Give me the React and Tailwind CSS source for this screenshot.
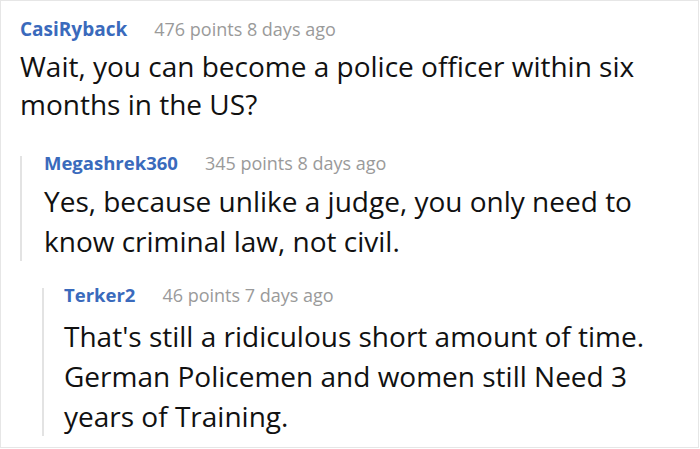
import React from "react";

function Meta({ user, meta, size = "19", h = "24" }) {
  return (
    <div className={`flex items-center gap-[27px] ${h === "24" ? "h-[24px]" : "h-[14px]"}`}>
      <span
        className={`${size === "19" ? "text-[19px]" : "text-[18.5px]"} leading-[24px] font-bold text-[#3a6abc]`}
      >
        {user}
      </span>
      <span className="text-[18px] leading-[24px] text-[#9a9a9a]">{meta}</span>
    </div>
  );
}

export default function App() {
  return (
    <div
      className="w-[699px] h-[448px] border border-[#e6e6e6] bg-white overflow-hidden"
      style={{ fontFamily: '"Open Sans", "Noto Sans", sans-serif' }}
    >
      <div className="pl-[19px] pt-[16px] pr-[10px]">
        <Meta user="CasiRyback" meta="476 points 8 days ago" />
        <p className="text-[28px] leading-[38px] text-[#111] mt-[6px] whitespace-nowrap">
          Wait, you can become a police officer within six
          <br />
          months in the US?
        </p>
        <div className="mt-[33px] border-l-2 border-[#e3e3e3] pl-[22px]">
          <Meta user="Megashrek360" meta="345 points 8 days ago" size="18" h="14" />
          <p className="text-[28px] leading-[40px] text-[#111] mt-[11px] -mb-[8px] whitespace-nowrap">
            Yes, because unlike a judge, you only need to
            <br />
            know criminal law, not civil.
          </p>
        </div>
        <div className="ml-[22px] mt-[35px] border-l-2 border-[#e3e3e3] pl-[20px]">
          <Meta user="Terker2" meta="46 points 7 days ago" size="18" h="14" />
          <p className="text-[28px] leading-[40px] text-[#111] mt-[14px] -mb-[10px] whitespace-nowrap">
            That's still a ridiculous short amount of time.
            <br />
            German Policemen and women still Need 3
            <br />
            years of Training.
          </p>
        </div>
      </div>
    </div>
  );
}
